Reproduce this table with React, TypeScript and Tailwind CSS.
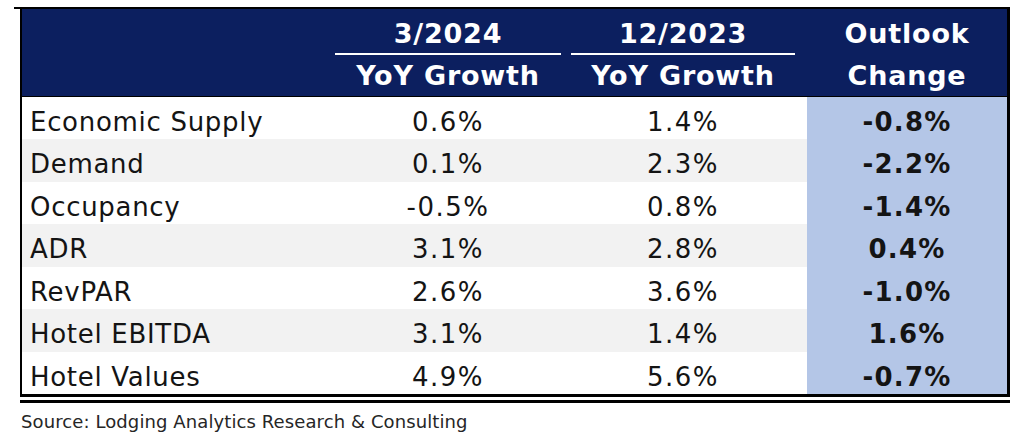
import React from 'react'

const ROWS: { label: string; a: string; b: string; c: string }[] = [
  { label: 'Economic Supply', a: '0.6%',  b: '1.4%', c: '-0.8%' },
  { label: 'Demand',          a: '0.1%',  b: '2.3%', c: '-2.2%' },
  { label: 'Occupancy',       a: '-0.5%', b: '0.8%', c: '-1.4%' },
  { label: 'ADR',             a: '3.1%',  b: '2.8%', c: '0.4%'  },
  { label: 'RevPAR',          a: '2.6%',  b: '3.6%', c: '-1.0%' },
  { label: 'Hotel EBITDA',    a: '3.1%',  b: '1.4%', c: '1.6%'  },
  { label: 'Hotel Values',    a: '4.9%',  b: '5.6%', c: '-0.7%' },
]

const COLS = 'grid grid-cols-[308px_236px_241px_200px]'

export default function App() {
  return (
    <div className="w-[1024px] h-[443px] bg-white pt-[7px] font-['DejaVu_Sans',sans-serif] text-[#141414]">
      {/* top rule, sticks out a little to the left */}
      <div className="ml-[14px] w-[996px] h-[2px] bg-black" />

      {/* table frame */}
      <div className="ml-[20px] w-[990px] border-l-2 border-r-[3px] border-b-[3px] border-black">
        {/* header */}
        <div className={`${COLS} h-[88px] bg-[#0c1f5f] text-white font-bold text-[27px] tracking-[0.8px] border-b border-black`}>
          <div />
          <HeadCell top="3/2024" bottom="YoY Growth" />
          <HeadCell top="12/2023" bottom="YoY Growth" shift />
          <div className="flex flex-col items-center">
            <div className="h-[44px] flex items-end leading-none pb-[6px]">Outlook</div>
            <div className="h-[2px]" />
            <div className="flex-1 flex items-center leading-none pb-[1px]">Change</div>
          </div>
        </div>

        {/* body */}
        {ROWS.map((r, i) => (
          <div key={r.label} className={`${COLS} text-[26px] tracking-[0.7px] leading-none ${i % 2 ? 'h-[43px]' : 'h-[42px]'}`}>
            <div className={`flex items-center pl-[8px] pt-[7px] ${i % 2 ? 'bg-[#f2f2f2]' : ''}`}>{r.label}</div>
            <div className={`flex items-center justify-center pt-[7px] tracking-[1.5px] ${i % 2 ? 'bg-[#f2f2f2]' : ''}`}>{r.a}</div>
            <div className={`flex items-center justify-center pt-[7px] tracking-[1.5px] pr-[7px] ${i % 2 ? 'bg-[#f2f2f2]' : ''}`}>{r.b}</div>
            <div className="flex items-center justify-center pt-[7px] bg-[#b4c6e7] font-bold tracking-[1.2px]">{r.c}</div>
          </div>
        ))}
      </div>

      {/* double rule under the table */}
      <div className="ml-[20px] mt-[3px] w-[990px] h-[3px] bg-black" />

      <div className="pl-[21px] pt-[10px] text-[18px] tracking-[0.1px] text-[#262626] leading-none">
        Source: Lodging Analytics Research &amp; Consulting
      </div>
    </div>
  )
}

function HeadCell({ top, bottom, shift }: { top: string; bottom: string; shift?: boolean }) {
  return (
    <div className={`flex flex-col ${shift ? 'pr-[7px]' : ''}`}>
      <div className="h-[44px] flex items-end justify-center leading-none pb-[6px]">{top}</div>
      <div className="h-[2px] bg-white mx-[5px]" />
      <div className="flex-1 flex items-center justify-center leading-none pb-[1px]">{bottom}</div>
    </div>
  )
}
